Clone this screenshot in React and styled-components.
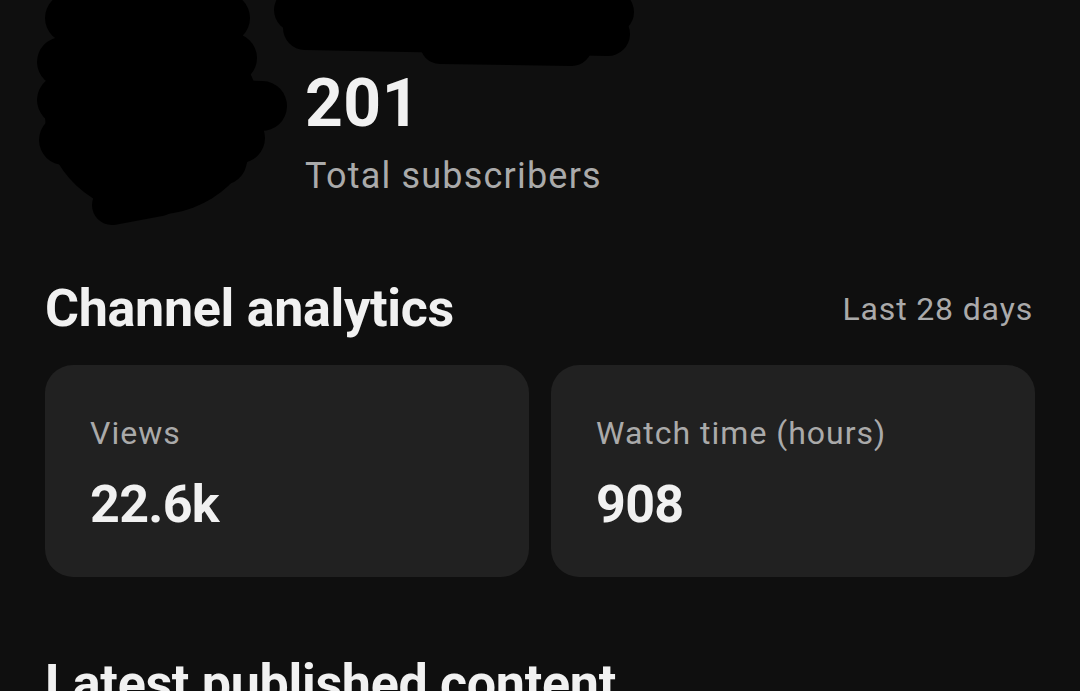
import React from 'react';
import styled, { createGlobalStyle } from 'styled-components';

const GlobalStyle = createGlobalStyle`
  html, body {
    margin: 0;
    padding: 0;
    background: #0f0f0f;
    font-family: Roboto, "Noto Sans", "Liberation Sans", sans-serif;
    overflow: hidden;
  }
`;

const Page = styled.div`
  width: 1080px;
  height: 691px;
  overflow: hidden;
  background: #0f0f0f;
  padding: 0 45px;
  box-sizing: border-box;
  color: #f1f1f1;
`;

const Header = styled.div`
  position: relative;
  display: flex;
  gap: 45px;
  height: 278px;
`;

const Avatar = styled.div`
  width: 215px;
  height: 200px;
  margin-top: 15px;
  border-radius: 50%;
  background: #000;
  flex-shrink: 0;
`;

const ChannelInfo = styled.div`
  display: flex;
  flex-direction: column;
`;

const ChannelName = styled.div`
  height: 65px;
`;

const SubCount = styled.div`
  font-size: 66px;
  line-height: 78px;
  font-weight: 700;
  color: #f1f1f1;
  letter-spacing: 0.5px;
`;

const SubLabel = styled.div`
  margin-top: 11px;
  font-size: 36px;
  line-height: 44px;
  color: #aaaaaa;
  letter-spacing: 1.2px;
`;

/* redaction scribbles drawn over avatar and channel name */
const Redaction = styled.svg`
  position: absolute;
  left: -45px;
  top: 0;
  width: 1080px;
  height: 240px;
  pointer-events: none;
`;

const SectionHead = styled.div`
  display: flex;
  align-items: center;
  justify-content: space-between;
`;

const Heading = styled.h2`
  margin: 0;
  font-size: 52px;
  line-height: 62px;
  font-weight: 700;
  color: #f1f1f1;
  letter-spacing: -0.3px;
`;

const Period = styled.span`
  font-size: 32px;
  line-height: 40px;
  color: #aaaaaa;
  letter-spacing: 0.85px;
  margin-right: 2px;
`;

const Cards = styled.div`
  display: grid;
  grid-template-columns: 1fr 1fr;
  gap: 22px;
  margin-top: 25px;
`;

const Card = styled.div`
  height: 212px;
  box-sizing: border-box;
  padding: 49px 45px 0;
  background: #212121;
  border-radius: 28px;
`;

const CardLabel = styled.div`
  font-size: 32px;
  line-height: 38px;
  color: #aaaaaa;
  letter-spacing: 1px;
`;

const CardValue = styled.div`
  margin-top: 22px;
  font-size: 52px;
  line-height: 62px;
  font-weight: 700;
  color: #f1f1f1;
  letter-spacing: -0.7px;
`;

const Latest = styled(Heading)`
  margin-top: 76px;
`;

const stats = [
  { label: 'Views', value: '22.6k' },
  { label: 'Watch time (hours)', value: '908' },
];

const App = () => (
  <>
    <GlobalStyle />
    <Page>
      <Header>
        <Avatar />
        <ChannelInfo>
          <ChannelName />
          <SubCount>201</SubCount>
          <SubLabel>Total subscribers</SubLabel>
        </ChannelInfo>
        <Redaction viewBox="0 0 1080 240">
          <g stroke="#000" strokeLinecap="round" fill="none">
            <path d="M70 18 L225 18" strokeWidth="50" />
            <path d="M62 62 L232 58" strokeWidth="50" />
            <path d="M62 100 L262 106" strokeWidth="50" />
            <path d="M64 140 L240 138" strokeWidth="50" />
            <path d="M118 196 L222 160" strokeWidth="50" />
            <path d="M112 205 L160 196" strokeWidth="40" />
            <path d="M296 10 L612 12" strokeWidth="44" />
            <path d="M305 28 L608 34" strokeWidth="44" />
            <path d="M440 44 L572 46" strokeWidth="40" />
          </g>
        </Redaction>
      </Header>

      <SectionHead>
        <Heading>Channel analytics</Heading>
        <Period>Last 28 days</Period>
      </SectionHead>

      <Cards>
        {stats.map(s => (
          <Card key={s.label}>
            <CardLabel>{s.label}</CardLabel>
            <CardValue>{s.value}</CardValue>
          </Card>
        ))}
      </Cards>

      <Latest>Latest published content</Latest>
    </Page>
  </>
);

export default App;
